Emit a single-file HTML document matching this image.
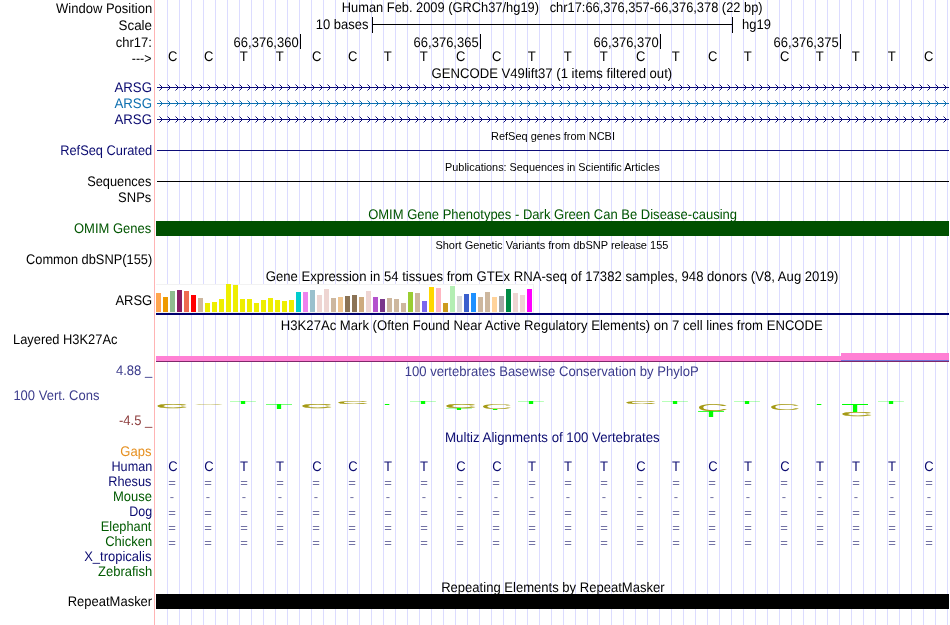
<!DOCTYPE html>
<html lang="en"><head><meta charset="utf-8"><title>UCSC Genome Browser chr17:66,376,357-66,376,378</title>
<style>html,body{margin:0;padding:0;background:#fff}body{width:950px;height:625px;overflow:hidden}svg{display:block;position:absolute;left:0;top:0}.tx{will-change:transform}text{font-family:"Liberation Sans",Arial,Helvetica,sans-serif;font-size:13.9px;fill:#000;text-rendering:geometricPrecision}.s{font-size:11px;text-rendering:auto}.lg{font-size:10px}.e{font-size:13px;text-rendering:auto}.r{text-anchor:end}.m{text-anchor:middle}.n{fill:#0a0a70}.g{fill:#005a00}</style></head><body>
<svg width="950" height="625" viewBox="0 0 950 625">
<rect width="950" height="625" fill="#fff"/>
<g fill="#dcdcff" shape-rendering="crispEdges">
<rect x="167" y="0" width="1" height="625"/>
<rect x="179" y="0" width="1" height="625"/>
<rect x="191" y="0" width="1" height="625"/>
<rect x="203" y="0" width="1" height="625"/>
<rect x="215" y="0" width="1" height="625"/>
<rect x="227" y="0" width="1" height="625"/>
<rect x="239" y="0" width="1" height="625"/>
<rect x="251" y="0" width="1" height="625"/>
<rect x="263" y="0" width="1" height="625"/>
<rect x="275" y="0" width="1" height="625"/>
<rect x="287" y="0" width="1" height="625"/>
<rect x="299" y="0" width="1" height="625"/>
<rect x="311" y="0" width="1" height="625"/>
<rect x="323" y="0" width="1" height="625"/>
<rect x="335" y="0" width="1" height="625"/>
<rect x="347" y="0" width="1" height="625"/>
<rect x="359" y="0" width="1" height="625"/>
<rect x="371" y="0" width="1" height="625"/>
<rect x="383" y="0" width="1" height="625"/>
<rect x="395" y="0" width="1" height="625"/>
<rect x="407" y="0" width="1" height="625"/>
<rect x="419" y="0" width="1" height="625"/>
<rect x="431" y="0" width="1" height="625"/>
<rect x="443" y="0" width="1" height="625"/>
<rect x="455" y="0" width="1" height="625"/>
<rect x="467" y="0" width="1" height="625"/>
<rect x="479" y="0" width="1" height="625"/>
<rect x="491" y="0" width="1" height="625"/>
<rect x="503" y="0" width="1" height="625"/>
<rect x="515" y="0" width="1" height="625"/>
<rect x="527" y="0" width="1" height="625"/>
<rect x="539" y="0" width="1" height="625"/>
<rect x="551" y="0" width="1" height="625"/>
<rect x="563" y="0" width="1" height="625"/>
<rect x="575" y="0" width="1" height="625"/>
<rect x="587" y="0" width="1" height="625"/>
<rect x="599" y="0" width="1" height="625"/>
<rect x="611" y="0" width="1" height="625"/>
<rect x="623" y="0" width="1" height="625"/>
<rect x="635" y="0" width="1" height="625"/>
<rect x="647" y="0" width="1" height="625"/>
<rect x="659" y="0" width="1" height="625"/>
<rect x="671" y="0" width="1" height="625"/>
<rect x="683" y="0" width="1" height="625"/>
<rect x="695" y="0" width="1" height="625"/>
<rect x="707" y="0" width="1" height="625"/>
<rect x="719" y="0" width="1" height="625"/>
<rect x="731" y="0" width="1" height="625"/>
<rect x="743" y="0" width="1" height="625"/>
<rect x="755" y="0" width="1" height="625"/>
<rect x="767" y="0" width="1" height="625"/>
<rect x="779" y="0" width="1" height="625"/>
<rect x="791" y="0" width="1" height="625"/>
<rect x="803" y="0" width="1" height="625"/>
<rect x="815" y="0" width="1" height="625"/>
<rect x="827" y="0" width="1" height="625"/>
<rect x="839" y="0" width="1" height="625"/>
<rect x="851" y="0" width="1" height="625"/>
<rect x="863" y="0" width="1" height="625"/>
<rect x="875" y="0" width="1" height="625"/>
<rect x="887" y="0" width="1" height="625"/>
<rect x="899" y="0" width="1" height="625"/>
<rect x="911" y="0" width="1" height="625"/>
<rect x="923" y="0" width="1" height="625"/>
<rect x="935" y="0" width="1" height="625"/>
<rect x="947" y="0" width="1" height="625"/>
</g>
<rect x="154" y="0" width="1" height="625" fill="#ffb4b4" shape-rendering="crispEdges"/>
<g fill="#000" shape-rendering="crispEdges">
<rect x="372" y="24" width="361" height="1"/><rect x="372" y="17" width="1" height="16"/><rect x="732" y="17" width="1" height="16"/>
<rect x="300" y="34" width="1" height="15"/>
<rect x="480" y="34" width="1" height="15"/>
<rect x="660" y="34" width="1" height="15"/>
<rect x="840" y="34" width="1" height="15"/>
</g>
<g stroke="#0c0c78" fill="none" stroke-width="1">
<rect x="157" y="87" width="792" height="1" fill="#0c0c78" stroke="none" shape-rendering="crispEdges"/>
<path d="M160.5 85.5l2 2l-2 2M168.5 85.5l2 2l-2 2M176.5 85.5l2 2l-2 2M184.5 85.5l2 2l-2 2M192.5 85.5l2 2l-2 2M200.5 85.5l2 2l-2 2M208.5 85.5l2 2l-2 2M216.5 85.5l2 2l-2 2M224.5 85.5l2 2l-2 2M232.5 85.5l2 2l-2 2M240.5 85.5l2 2l-2 2M248.5 85.5l2 2l-2 2M256.5 85.5l2 2l-2 2M264.5 85.5l2 2l-2 2M272.5 85.5l2 2l-2 2M280.5 85.5l2 2l-2 2M288.5 85.5l2 2l-2 2M296.5 85.5l2 2l-2 2M304.5 85.5l2 2l-2 2M312.5 85.5l2 2l-2 2M320.5 85.5l2 2l-2 2M328.5 85.5l2 2l-2 2M336.5 85.5l2 2l-2 2M344.5 85.5l2 2l-2 2M352.5 85.5l2 2l-2 2M360.5 85.5l2 2l-2 2M368.5 85.5l2 2l-2 2M376.5 85.5l2 2l-2 2M384.5 85.5l2 2l-2 2M392.5 85.5l2 2l-2 2M400.5 85.5l2 2l-2 2M408.5 85.5l2 2l-2 2M416.5 85.5l2 2l-2 2M424.5 85.5l2 2l-2 2M432.5 85.5l2 2l-2 2M440.5 85.5l2 2l-2 2M448.5 85.5l2 2l-2 2M456.5 85.5l2 2l-2 2M464.5 85.5l2 2l-2 2M472.5 85.5l2 2l-2 2M480.5 85.5l2 2l-2 2M488.5 85.5l2 2l-2 2M496.5 85.5l2 2l-2 2M504.5 85.5l2 2l-2 2M512.5 85.5l2 2l-2 2M520.5 85.5l2 2l-2 2M528.5 85.5l2 2l-2 2M536.5 85.5l2 2l-2 2M544.5 85.5l2 2l-2 2M552.5 85.5l2 2l-2 2M560.5 85.5l2 2l-2 2M568.5 85.5l2 2l-2 2M576.5 85.5l2 2l-2 2M584.5 85.5l2 2l-2 2M592.5 85.5l2 2l-2 2M600.5 85.5l2 2l-2 2M608.5 85.5l2 2l-2 2M616.5 85.5l2 2l-2 2M624.5 85.5l2 2l-2 2M632.5 85.5l2 2l-2 2M640.5 85.5l2 2l-2 2M648.5 85.5l2 2l-2 2M656.5 85.5l2 2l-2 2M664.5 85.5l2 2l-2 2M672.5 85.5l2 2l-2 2M680.5 85.5l2 2l-2 2M688.5 85.5l2 2l-2 2M696.5 85.5l2 2l-2 2M704.5 85.5l2 2l-2 2M712.5 85.5l2 2l-2 2M720.5 85.5l2 2l-2 2M728.5 85.5l2 2l-2 2M736.5 85.5l2 2l-2 2M744.5 85.5l2 2l-2 2M752.5 85.5l2 2l-2 2M760.5 85.5l2 2l-2 2M768.5 85.5l2 2l-2 2M776.5 85.5l2 2l-2 2M784.5 85.5l2 2l-2 2M792.5 85.5l2 2l-2 2M800.5 85.5l2 2l-2 2M808.5 85.5l2 2l-2 2M816.5 85.5l2 2l-2 2M824.5 85.5l2 2l-2 2M832.5 85.5l2 2l-2 2M840.5 85.5l2 2l-2 2M848.5 85.5l2 2l-2 2M856.5 85.5l2 2l-2 2M864.5 85.5l2 2l-2 2M872.5 85.5l2 2l-2 2M880.5 85.5l2 2l-2 2M888.5 85.5l2 2l-2 2M896.5 85.5l2 2l-2 2M904.5 85.5l2 2l-2 2M912.5 85.5l2 2l-2 2M920.5 85.5l2 2l-2 2M928.5 85.5l2 2l-2 2M936.5 85.5l2 2l-2 2M944.5 85.5l2 2l-2 2" shape-rendering="crispEdges" stroke-linecap="square"/>
<path d="M159 84.5h1M159 90.5h1M167 84.5h1M167 90.5h1M175 84.5h1M175 90.5h1M183 84.5h1M183 90.5h1M191 84.5h1M191 90.5h1M199 84.5h1M199 90.5h1M207 84.5h1M207 90.5h1M215 84.5h1M215 90.5h1M223 84.5h1M223 90.5h1M231 84.5h1M231 90.5h1M239 84.5h1M239 90.5h1M247 84.5h1M247 90.5h1M255 84.5h1M255 90.5h1M263 84.5h1M263 90.5h1M271 84.5h1M271 90.5h1M279 84.5h1M279 90.5h1M287 84.5h1M287 90.5h1M295 84.5h1M295 90.5h1M303 84.5h1M303 90.5h1M311 84.5h1M311 90.5h1M319 84.5h1M319 90.5h1M327 84.5h1M327 90.5h1M335 84.5h1M335 90.5h1M343 84.5h1M343 90.5h1M351 84.5h1M351 90.5h1M359 84.5h1M359 90.5h1M367 84.5h1M367 90.5h1M375 84.5h1M375 90.5h1M383 84.5h1M383 90.5h1M391 84.5h1M391 90.5h1M399 84.5h1M399 90.5h1M407 84.5h1M407 90.5h1M415 84.5h1M415 90.5h1M423 84.5h1M423 90.5h1M431 84.5h1M431 90.5h1M439 84.5h1M439 90.5h1M447 84.5h1M447 90.5h1M455 84.5h1M455 90.5h1M463 84.5h1M463 90.5h1M471 84.5h1M471 90.5h1M479 84.5h1M479 90.5h1M487 84.5h1M487 90.5h1M495 84.5h1M495 90.5h1M503 84.5h1M503 90.5h1M511 84.5h1M511 90.5h1M519 84.5h1M519 90.5h1M527 84.5h1M527 90.5h1M535 84.5h1M535 90.5h1M543 84.5h1M543 90.5h1M551 84.5h1M551 90.5h1M559 84.5h1M559 90.5h1M567 84.5h1M567 90.5h1M575 84.5h1M575 90.5h1M583 84.5h1M583 90.5h1M591 84.5h1M591 90.5h1M599 84.5h1M599 90.5h1M607 84.5h1M607 90.5h1M615 84.5h1M615 90.5h1M623 84.5h1M623 90.5h1M631 84.5h1M631 90.5h1M639 84.5h1M639 90.5h1M647 84.5h1M647 90.5h1M655 84.5h1M655 90.5h1M663 84.5h1M663 90.5h1M671 84.5h1M671 90.5h1M679 84.5h1M679 90.5h1M687 84.5h1M687 90.5h1M695 84.5h1M695 90.5h1M703 84.5h1M703 90.5h1M711 84.5h1M711 90.5h1M719 84.5h1M719 90.5h1M727 84.5h1M727 90.5h1M735 84.5h1M735 90.5h1M743 84.5h1M743 90.5h1M751 84.5h1M751 90.5h1M759 84.5h1M759 90.5h1M767 84.5h1M767 90.5h1M775 84.5h1M775 90.5h1M783 84.5h1M783 90.5h1M791 84.5h1M791 90.5h1M799 84.5h1M799 90.5h1M807 84.5h1M807 90.5h1M815 84.5h1M815 90.5h1M823 84.5h1M823 90.5h1M831 84.5h1M831 90.5h1M839 84.5h1M839 90.5h1M847 84.5h1M847 90.5h1M855 84.5h1M855 90.5h1M863 84.5h1M863 90.5h1M871 84.5h1M871 90.5h1M879 84.5h1M879 90.5h1M887 84.5h1M887 90.5h1M895 84.5h1M895 90.5h1M903 84.5h1M903 90.5h1M911 84.5h1M911 90.5h1M919 84.5h1M919 90.5h1M927 84.5h1M927 90.5h1M935 84.5h1M935 90.5h1M943 84.5h1M943 90.5h1" shape-rendering="crispEdges" stroke-opacity="0.5"/>
</g>
<g stroke="#0e70b0" fill="none" stroke-width="1">
<rect x="157" y="103" width="792" height="1" fill="#0e70b0" stroke="none" shape-rendering="crispEdges"/>
<path d="M160.5 101.5l2 2l-2 2M168.5 101.5l2 2l-2 2M176.5 101.5l2 2l-2 2M184.5 101.5l2 2l-2 2M192.5 101.5l2 2l-2 2M200.5 101.5l2 2l-2 2M208.5 101.5l2 2l-2 2M216.5 101.5l2 2l-2 2M224.5 101.5l2 2l-2 2M232.5 101.5l2 2l-2 2M240.5 101.5l2 2l-2 2M248.5 101.5l2 2l-2 2M256.5 101.5l2 2l-2 2M264.5 101.5l2 2l-2 2M272.5 101.5l2 2l-2 2M280.5 101.5l2 2l-2 2M288.5 101.5l2 2l-2 2M296.5 101.5l2 2l-2 2M304.5 101.5l2 2l-2 2M312.5 101.5l2 2l-2 2M320.5 101.5l2 2l-2 2M328.5 101.5l2 2l-2 2M336.5 101.5l2 2l-2 2M344.5 101.5l2 2l-2 2M352.5 101.5l2 2l-2 2M360.5 101.5l2 2l-2 2M368.5 101.5l2 2l-2 2M376.5 101.5l2 2l-2 2M384.5 101.5l2 2l-2 2M392.5 101.5l2 2l-2 2M400.5 101.5l2 2l-2 2M408.5 101.5l2 2l-2 2M416.5 101.5l2 2l-2 2M424.5 101.5l2 2l-2 2M432.5 101.5l2 2l-2 2M440.5 101.5l2 2l-2 2M448.5 101.5l2 2l-2 2M456.5 101.5l2 2l-2 2M464.5 101.5l2 2l-2 2M472.5 101.5l2 2l-2 2M480.5 101.5l2 2l-2 2M488.5 101.5l2 2l-2 2M496.5 101.5l2 2l-2 2M504.5 101.5l2 2l-2 2M512.5 101.5l2 2l-2 2M520.5 101.5l2 2l-2 2M528.5 101.5l2 2l-2 2M536.5 101.5l2 2l-2 2M544.5 101.5l2 2l-2 2M552.5 101.5l2 2l-2 2M560.5 101.5l2 2l-2 2M568.5 101.5l2 2l-2 2M576.5 101.5l2 2l-2 2M584.5 101.5l2 2l-2 2M592.5 101.5l2 2l-2 2M600.5 101.5l2 2l-2 2M608.5 101.5l2 2l-2 2M616.5 101.5l2 2l-2 2M624.5 101.5l2 2l-2 2M632.5 101.5l2 2l-2 2M640.5 101.5l2 2l-2 2M648.5 101.5l2 2l-2 2M656.5 101.5l2 2l-2 2M664.5 101.5l2 2l-2 2M672.5 101.5l2 2l-2 2M680.5 101.5l2 2l-2 2M688.5 101.5l2 2l-2 2M696.5 101.5l2 2l-2 2M704.5 101.5l2 2l-2 2M712.5 101.5l2 2l-2 2M720.5 101.5l2 2l-2 2M728.5 101.5l2 2l-2 2M736.5 101.5l2 2l-2 2M744.5 101.5l2 2l-2 2M752.5 101.5l2 2l-2 2M760.5 101.5l2 2l-2 2M768.5 101.5l2 2l-2 2M776.5 101.5l2 2l-2 2M784.5 101.5l2 2l-2 2M792.5 101.5l2 2l-2 2M800.5 101.5l2 2l-2 2M808.5 101.5l2 2l-2 2M816.5 101.5l2 2l-2 2M824.5 101.5l2 2l-2 2M832.5 101.5l2 2l-2 2M840.5 101.5l2 2l-2 2M848.5 101.5l2 2l-2 2M856.5 101.5l2 2l-2 2M864.5 101.5l2 2l-2 2M872.5 101.5l2 2l-2 2M880.5 101.5l2 2l-2 2M888.5 101.5l2 2l-2 2M896.5 101.5l2 2l-2 2M904.5 101.5l2 2l-2 2M912.5 101.5l2 2l-2 2M920.5 101.5l2 2l-2 2M928.5 101.5l2 2l-2 2M936.5 101.5l2 2l-2 2M944.5 101.5l2 2l-2 2" shape-rendering="crispEdges" stroke-linecap="square"/>
<path d="M159 100.5h1M159 106.5h1M167 100.5h1M167 106.5h1M175 100.5h1M175 106.5h1M183 100.5h1M183 106.5h1M191 100.5h1M191 106.5h1M199 100.5h1M199 106.5h1M207 100.5h1M207 106.5h1M215 100.5h1M215 106.5h1M223 100.5h1M223 106.5h1M231 100.5h1M231 106.5h1M239 100.5h1M239 106.5h1M247 100.5h1M247 106.5h1M255 100.5h1M255 106.5h1M263 100.5h1M263 106.5h1M271 100.5h1M271 106.5h1M279 100.5h1M279 106.5h1M287 100.5h1M287 106.5h1M295 100.5h1M295 106.5h1M303 100.5h1M303 106.5h1M311 100.5h1M311 106.5h1M319 100.5h1M319 106.5h1M327 100.5h1M327 106.5h1M335 100.5h1M335 106.5h1M343 100.5h1M343 106.5h1M351 100.5h1M351 106.5h1M359 100.5h1M359 106.5h1M367 100.5h1M367 106.5h1M375 100.5h1M375 106.5h1M383 100.5h1M383 106.5h1M391 100.5h1M391 106.5h1M399 100.5h1M399 106.5h1M407 100.5h1M407 106.5h1M415 100.5h1M415 106.5h1M423 100.5h1M423 106.5h1M431 100.5h1M431 106.5h1M439 100.5h1M439 106.5h1M447 100.5h1M447 106.5h1M455 100.5h1M455 106.5h1M463 100.5h1M463 106.5h1M471 100.5h1M471 106.5h1M479 100.5h1M479 106.5h1M487 100.5h1M487 106.5h1M495 100.5h1M495 106.5h1M503 100.5h1M503 106.5h1M511 100.5h1M511 106.5h1M519 100.5h1M519 106.5h1M527 100.5h1M527 106.5h1M535 100.5h1M535 106.5h1M543 100.5h1M543 106.5h1M551 100.5h1M551 106.5h1M559 100.5h1M559 106.5h1M567 100.5h1M567 106.5h1M575 100.5h1M575 106.5h1M583 100.5h1M583 106.5h1M591 100.5h1M591 106.5h1M599 100.5h1M599 106.5h1M607 100.5h1M607 106.5h1M615 100.5h1M615 106.5h1M623 100.5h1M623 106.5h1M631 100.5h1M631 106.5h1M639 100.5h1M639 106.5h1M647 100.5h1M647 106.5h1M655 100.5h1M655 106.5h1M663 100.5h1M663 106.5h1M671 100.5h1M671 106.5h1M679 100.5h1M679 106.5h1M687 100.5h1M687 106.5h1M695 100.5h1M695 106.5h1M703 100.5h1M703 106.5h1M711 100.5h1M711 106.5h1M719 100.5h1M719 106.5h1M727 100.5h1M727 106.5h1M735 100.5h1M735 106.5h1M743 100.5h1M743 106.5h1M751 100.5h1M751 106.5h1M759 100.5h1M759 106.5h1M767 100.5h1M767 106.5h1M775 100.5h1M775 106.5h1M783 100.5h1M783 106.5h1M791 100.5h1M791 106.5h1M799 100.5h1M799 106.5h1M807 100.5h1M807 106.5h1M815 100.5h1M815 106.5h1M823 100.5h1M823 106.5h1M831 100.5h1M831 106.5h1M839 100.5h1M839 106.5h1M847 100.5h1M847 106.5h1M855 100.5h1M855 106.5h1M863 100.5h1M863 106.5h1M871 100.5h1M871 106.5h1M879 100.5h1M879 106.5h1M887 100.5h1M887 106.5h1M895 100.5h1M895 106.5h1M903 100.5h1M903 106.5h1M911 100.5h1M911 106.5h1M919 100.5h1M919 106.5h1M927 100.5h1M927 106.5h1M935 100.5h1M935 106.5h1M943 100.5h1M943 106.5h1" shape-rendering="crispEdges" stroke-opacity="0.5"/>
</g>
<g stroke="#0c0c78" fill="none" stroke-width="1">
<rect x="157" y="119" width="792" height="1" fill="#0c0c78" stroke="none" shape-rendering="crispEdges"/>
<path d="M160.5 117.5l2 2l-2 2M168.5 117.5l2 2l-2 2M176.5 117.5l2 2l-2 2M184.5 117.5l2 2l-2 2M192.5 117.5l2 2l-2 2M200.5 117.5l2 2l-2 2M208.5 117.5l2 2l-2 2M216.5 117.5l2 2l-2 2M224.5 117.5l2 2l-2 2M232.5 117.5l2 2l-2 2M240.5 117.5l2 2l-2 2M248.5 117.5l2 2l-2 2M256.5 117.5l2 2l-2 2M264.5 117.5l2 2l-2 2M272.5 117.5l2 2l-2 2M280.5 117.5l2 2l-2 2M288.5 117.5l2 2l-2 2M296.5 117.5l2 2l-2 2M304.5 117.5l2 2l-2 2M312.5 117.5l2 2l-2 2M320.5 117.5l2 2l-2 2M328.5 117.5l2 2l-2 2M336.5 117.5l2 2l-2 2M344.5 117.5l2 2l-2 2M352.5 117.5l2 2l-2 2M360.5 117.5l2 2l-2 2M368.5 117.5l2 2l-2 2M376.5 117.5l2 2l-2 2M384.5 117.5l2 2l-2 2M392.5 117.5l2 2l-2 2M400.5 117.5l2 2l-2 2M408.5 117.5l2 2l-2 2M416.5 117.5l2 2l-2 2M424.5 117.5l2 2l-2 2M432.5 117.5l2 2l-2 2M440.5 117.5l2 2l-2 2M448.5 117.5l2 2l-2 2M456.5 117.5l2 2l-2 2M464.5 117.5l2 2l-2 2M472.5 117.5l2 2l-2 2M480.5 117.5l2 2l-2 2M488.5 117.5l2 2l-2 2M496.5 117.5l2 2l-2 2M504.5 117.5l2 2l-2 2M512.5 117.5l2 2l-2 2M520.5 117.5l2 2l-2 2M528.5 117.5l2 2l-2 2M536.5 117.5l2 2l-2 2M544.5 117.5l2 2l-2 2M552.5 117.5l2 2l-2 2M560.5 117.5l2 2l-2 2M568.5 117.5l2 2l-2 2M576.5 117.5l2 2l-2 2M584.5 117.5l2 2l-2 2M592.5 117.5l2 2l-2 2M600.5 117.5l2 2l-2 2M608.5 117.5l2 2l-2 2M616.5 117.5l2 2l-2 2M624.5 117.5l2 2l-2 2M632.5 117.5l2 2l-2 2M640.5 117.5l2 2l-2 2M648.5 117.5l2 2l-2 2M656.5 117.5l2 2l-2 2M664.5 117.5l2 2l-2 2M672.5 117.5l2 2l-2 2M680.5 117.5l2 2l-2 2M688.5 117.5l2 2l-2 2M696.5 117.5l2 2l-2 2M704.5 117.5l2 2l-2 2M712.5 117.5l2 2l-2 2M720.5 117.5l2 2l-2 2M728.5 117.5l2 2l-2 2M736.5 117.5l2 2l-2 2M744.5 117.5l2 2l-2 2M752.5 117.5l2 2l-2 2M760.5 117.5l2 2l-2 2M768.5 117.5l2 2l-2 2M776.5 117.5l2 2l-2 2M784.5 117.5l2 2l-2 2M792.5 117.5l2 2l-2 2M800.5 117.5l2 2l-2 2M808.5 117.5l2 2l-2 2M816.5 117.5l2 2l-2 2M824.5 117.5l2 2l-2 2M832.5 117.5l2 2l-2 2M840.5 117.5l2 2l-2 2M848.5 117.5l2 2l-2 2M856.5 117.5l2 2l-2 2M864.5 117.5l2 2l-2 2M872.5 117.5l2 2l-2 2M880.5 117.5l2 2l-2 2M888.5 117.5l2 2l-2 2M896.5 117.5l2 2l-2 2M904.5 117.5l2 2l-2 2M912.5 117.5l2 2l-2 2M920.5 117.5l2 2l-2 2M928.5 117.5l2 2l-2 2M936.5 117.5l2 2l-2 2M944.5 117.5l2 2l-2 2" shape-rendering="crispEdges" stroke-linecap="square"/>
<path d="M159 116.5h1M159 122.5h1M167 116.5h1M167 122.5h1M175 116.5h1M175 122.5h1M183 116.5h1M183 122.5h1M191 116.5h1M191 122.5h1M199 116.5h1M199 122.5h1M207 116.5h1M207 122.5h1M215 116.5h1M215 122.5h1M223 116.5h1M223 122.5h1M231 116.5h1M231 122.5h1M239 116.5h1M239 122.5h1M247 116.5h1M247 122.5h1M255 116.5h1M255 122.5h1M263 116.5h1M263 122.5h1M271 116.5h1M271 122.5h1M279 116.5h1M279 122.5h1M287 116.5h1M287 122.5h1M295 116.5h1M295 122.5h1M303 116.5h1M303 122.5h1M311 116.5h1M311 122.5h1M319 116.5h1M319 122.5h1M327 116.5h1M327 122.5h1M335 116.5h1M335 122.5h1M343 116.5h1M343 122.5h1M351 116.5h1M351 122.5h1M359 116.5h1M359 122.5h1M367 116.5h1M367 122.5h1M375 116.5h1M375 122.5h1M383 116.5h1M383 122.5h1M391 116.5h1M391 122.5h1M399 116.5h1M399 122.5h1M407 116.5h1M407 122.5h1M415 116.5h1M415 122.5h1M423 116.5h1M423 122.5h1M431 116.5h1M431 122.5h1M439 116.5h1M439 122.5h1M447 116.5h1M447 122.5h1M455 116.5h1M455 122.5h1M463 116.5h1M463 122.5h1M471 116.5h1M471 122.5h1M479 116.5h1M479 122.5h1M487 116.5h1M487 122.5h1M495 116.5h1M495 122.5h1M503 116.5h1M503 122.5h1M511 116.5h1M511 122.5h1M519 116.5h1M519 122.5h1M527 116.5h1M527 122.5h1M535 116.5h1M535 122.5h1M543 116.5h1M543 122.5h1M551 116.5h1M551 122.5h1M559 116.5h1M559 122.5h1M567 116.5h1M567 122.5h1M575 116.5h1M575 122.5h1M583 116.5h1M583 122.5h1M591 116.5h1M591 122.5h1M599 116.5h1M599 122.5h1M607 116.5h1M607 122.5h1M615 116.5h1M615 122.5h1M623 116.5h1M623 122.5h1M631 116.5h1M631 122.5h1M639 116.5h1M639 122.5h1M647 116.5h1M647 122.5h1M655 116.5h1M655 122.5h1M663 116.5h1M663 122.5h1M671 116.5h1M671 122.5h1M679 116.5h1M679 122.5h1M687 116.5h1M687 122.5h1M695 116.5h1M695 122.5h1M703 116.5h1M703 122.5h1M711 116.5h1M711 122.5h1M719 116.5h1M719 122.5h1M727 116.5h1M727 122.5h1M735 116.5h1M735 122.5h1M743 116.5h1M743 122.5h1M751 116.5h1M751 122.5h1M759 116.5h1M759 122.5h1M767 116.5h1M767 122.5h1M775 116.5h1M775 122.5h1M783 116.5h1M783 122.5h1M791 116.5h1M791 122.5h1M799 116.5h1M799 122.5h1M807 116.5h1M807 122.5h1M815 116.5h1M815 122.5h1M823 116.5h1M823 122.5h1M831 116.5h1M831 122.5h1M839 116.5h1M839 122.5h1M847 116.5h1M847 122.5h1M855 116.5h1M855 122.5h1M863 116.5h1M863 122.5h1M871 116.5h1M871 122.5h1M879 116.5h1M879 122.5h1M887 116.5h1M887 122.5h1M895 116.5h1M895 122.5h1M903 116.5h1M903 122.5h1M911 116.5h1M911 122.5h1M919 116.5h1M919 122.5h1M927 116.5h1M927 122.5h1M935 116.5h1M935 122.5h1M943 116.5h1M943 122.5h1" shape-rendering="crispEdges" stroke-opacity="0.5"/>
</g>
<rect x="157" y="150" width="792" height="1" fill="#0c0c78" shape-rendering="crispEdges"/>
<rect x="157" y="181" width="792" height="1" fill="#000" shape-rendering="crispEdges"/>
<rect x="156" y="221" width="793" height="15" fill="#005000" shape-rendering="crispEdges"/>
<g shape-rendering="crispEdges">
<rect x="156" y="284" width="378" height="29" fill="#f2f2f2"/><rect x="156" y="285" width="377" height="27" fill="#fff"/>
<rect x="156" y="293" width="5" height="19" fill="#FFA54F"/>
<rect x="163" y="297" width="5" height="15" fill="#EE9A00"/>
<rect x="170" y="291" width="5" height="21" fill="#8FBC8F"/>
<rect x="177" y="290" width="5" height="22" fill="#8B1C62"/>
<rect x="184" y="291" width="5" height="21" fill="#EE6A50"/>
<rect x="191" y="295" width="5" height="17" fill="#FF0000"/>
<rect x="198" y="298" width="5" height="14" fill="#CDB79E"/>
<rect x="205" y="303" width="5" height="9" fill="#EEEE00"/>
<rect x="212" y="302" width="5" height="10" fill="#EEEE00"/>
<rect x="219" y="299" width="5" height="13" fill="#EEEE00"/>
<rect x="226" y="284" width="5" height="28" fill="#EEEE00"/>
<rect x="233" y="285" width="5" height="27" fill="#EEEE00"/>
<rect x="240" y="299" width="5" height="13" fill="#EEEE00"/>
<rect x="247" y="299" width="5" height="13" fill="#EEEE00"/>
<rect x="254" y="303" width="5" height="9" fill="#EEEE00"/>
<rect x="261" y="300" width="5" height="12" fill="#EEEE00"/>
<rect x="268" y="298" width="5" height="14" fill="#EEEE00"/>
<rect x="275" y="300" width="5" height="12" fill="#EEEE00"/>
<rect x="282" y="301" width="5" height="11" fill="#EEEE00"/>
<rect x="289" y="300" width="5" height="12" fill="#EEEE00"/>
<rect x="296" y="292" width="5" height="20" fill="#00CDCD"/>
<rect x="303" y="292" width="5" height="20" fill="#EE82EE"/>
<rect x="310" y="290" width="5" height="22" fill="#9AC0CD"/>
<rect x="317" y="295" width="5" height="17" fill="#EED5D2"/>
<rect x="324" y="289" width="5" height="23" fill="#EED5D2"/>
<rect x="331" y="298" width="5" height="14" fill="#CDB79E"/>
<rect x="338" y="297" width="5" height="15" fill="#EEC591"/>
<rect x="345" y="296" width="5" height="16" fill="#8B7355"/>
<rect x="352" y="295" width="5" height="17" fill="#8B7355"/>
<rect x="359" y="297" width="5" height="15" fill="#CDAA7D"/>
<rect x="366" y="291" width="5" height="21" fill="#EED5D2"/>
<rect x="373" y="297" width="5" height="15" fill="#B452CD"/>
<rect x="380" y="299" width="5" height="13" fill="#7A378B"/>
<rect x="387" y="298" width="5" height="14" fill="#CDB79E"/>
<rect x="394" y="299" width="5" height="13" fill="#CDB79E"/>
<rect x="401" y="303" width="5" height="9" fill="#CDB79E"/>
<rect x="408" y="292" width="5" height="20" fill="#9ACD32"/>
<rect x="415" y="293" width="5" height="19" fill="#CDB79E"/>
<rect x="422" y="301" width="5" height="11" fill="#7A67EE"/>
<rect x="429" y="287" width="5" height="25" fill="#FFD700"/>
<rect x="436" y="288" width="5" height="24" fill="#FFB6C1"/>
<rect x="443" y="303" width="5" height="9" fill="#CD9B1D"/>
<rect x="450" y="286" width="5" height="26" fill="#B4EEB4"/>
<rect x="457" y="296" width="5" height="16" fill="#D9D9D9"/>
<rect x="464" y="294" width="5" height="18" fill="#3A5FCD"/>
<rect x="471" y="293" width="5" height="19" fill="#1E90FF"/>
<rect x="478" y="297" width="5" height="15" fill="#CDB79E"/>
<rect x="485" y="292" width="5" height="20" fill="#CDB79E"/>
<rect x="492" y="297" width="5" height="15" fill="#FFD39B"/>
<rect x="499" y="296" width="5" height="16" fill="#A6A6A6"/>
<rect x="506" y="289" width="5" height="23" fill="#008B45"/>
<rect x="513" y="293" width="5" height="19" fill="#EED5D2"/>
<rect x="520" y="295" width="5" height="17" fill="#EED5D2"/>
<rect x="527" y="289" width="5" height="23" fill="#FF00FF"/>
<rect x="156" y="313" width="793" height="2" fill="#00006e"/>
<rect x="156" y="356" width="793" height="6" fill="#ff80d4"/><rect x="841" y="353" width="108" height="3" fill="#ff80d4"/>
<rect x="841" y="360" width="108" height="1" fill="#7272d8"/><rect x="156" y="361" width="793" height="1" fill="#80286a"/>
</g>
<rect x="156" y="594" width="793" height="15" fill="#000" shape-rendering="crispEdges"/>
</svg>
<svg class="tx" width="950" height="625" viewBox="0 0 950 625">
<text x="152.2" y="13" class="r" textLength="96.1" lengthAdjust="spacingAndGlyphs" xml:space="preserve">Window Position</text>
<text x="152.0" y="30" class="r" textLength="33.5" lengthAdjust="spacingAndGlyphs" xml:space="preserve">Scale</text>
<text x="151.79999999999998" y="47" class="r" textLength="36.1" lengthAdjust="spacingAndGlyphs" xml:space="preserve">chr17:</text>
<text x="151.39999999999998" y="62.8" class="r" textLength="19.6" lengthAdjust="spacingAndGlyphs" xml:space="preserve">---&gt;</text>
<text x="152.0" y="92" class="r n" textLength="37.6" lengthAdjust="spacingAndGlyphs" xml:space="preserve">ARSG</text>
<text x="152.0" y="108" class="r" style="fill:#0e70b0" textLength="37.6" lengthAdjust="spacingAndGlyphs" xml:space="preserve">ARSG</text>
<text x="152.0" y="124" class="r n" textLength="37.6" lengthAdjust="spacingAndGlyphs" xml:space="preserve">ARSG</text>
<text x="152.2" y="155" class="r n" textLength="92.0" lengthAdjust="spacingAndGlyphs" xml:space="preserve">RefSeq Curated</text>
<text x="151.29999999999998" y="186" class="r" textLength="64.1" lengthAdjust="spacingAndGlyphs" xml:space="preserve">Sequences</text>
<text x="151.29999999999998" y="202" class="r" textLength="33.2" lengthAdjust="spacingAndGlyphs" xml:space="preserve">SNPs</text>
<text x="151.29999999999998" y="233" class="r" style="fill:#005500" textLength="77.3" lengthAdjust="spacingAndGlyphs" xml:space="preserve">OMIM Genes</text>
<text x="152.2" y="264" class="r" textLength="126.2" lengthAdjust="spacingAndGlyphs" xml:space="preserve">Common dbSNP(155)</text>
<text x="152.2" y="305" class="r" textLength="36.8" lengthAdjust="spacingAndGlyphs" xml:space="preserve">ARSG</text>
<text x="13" y="344" textLength="104.4" lengthAdjust="spacingAndGlyphs" xml:space="preserve">Layered H3K27Ac</text>
<text x="152.2" y="375" class="r" style="fill:#3c3c8c" textLength="36.2" lengthAdjust="spacingAndGlyphs" xml:space="preserve">4.88 _</text>
<text x="13.4" y="400" style="fill:#3c3c8c" textLength="86.0" lengthAdjust="spacingAndGlyphs" xml:space="preserve">100 Vert. Cons</text>
<text x="152.2" y="425" class="r" style="fill:#8c3c3c" textLength="33.2" lengthAdjust="spacingAndGlyphs" xml:space="preserve">-4.5 _</text>
<text x="151.39999999999998" y="456" class="r" style="fill:#e69020" textLength="31.1" lengthAdjust="spacingAndGlyphs" xml:space="preserve">Gaps</text>
<text x="152.2" y="471" class="r n" textLength="40.7" lengthAdjust="spacingAndGlyphs" xml:space="preserve">Human</text>
<text x="151.39999999999998" y="486" class="r n" textLength="43.2" lengthAdjust="spacingAndGlyphs" xml:space="preserve">Rhesus</text>
<text x="151.89999999999998" y="501" class="r g" textLength="39.0" lengthAdjust="spacingAndGlyphs" xml:space="preserve">Mouse</text>
<text x="152.2" y="516" class="r n" textLength="22.9" lengthAdjust="spacingAndGlyphs" xml:space="preserve">Dog</text>
<text x="151.39999999999998" y="531" class="r g" textLength="50.6" lengthAdjust="spacingAndGlyphs" xml:space="preserve">Elephant</text>
<text x="152.2" y="546" class="r g" textLength="47.0" lengthAdjust="spacingAndGlyphs" xml:space="preserve">Chicken</text>
<text x="151.39999999999998" y="561" class="r n" textLength="67.2" lengthAdjust="spacingAndGlyphs" xml:space="preserve">X_tropicalis</text>
<text x="152.2" y="576" class="r g" textLength="54.2" lengthAdjust="spacingAndGlyphs" xml:space="preserve">Zebrafish</text>
<text x="152.2" y="606" class="r" textLength="84.5" lengthAdjust="spacingAndGlyphs" xml:space="preserve">RepeatMasker</text>
<text x="552.2" y="12" class="m" textLength="420.8" lengthAdjust="spacingAndGlyphs" xml:space="preserve">Human Feb. 2009 (GRCh37/hg19)   chr17:66,376,357-66,376,378 (22 bp)</text>
<text x="368.5" y="29" class="r" textLength="52.8" lengthAdjust="spacingAndGlyphs" xml:space="preserve">10 bases</text>
<text x="742" y="29" textLength="28.9" lengthAdjust="spacingAndGlyphs" xml:space="preserve">hg19</text>
<text x="298.7" y="47" class="r" textLength="65.1" lengthAdjust="spacingAndGlyphs" xml:space="preserve">66,376,360</text>
<text x="478.7" y="47" class="r" textLength="65.1" lengthAdjust="spacingAndGlyphs" xml:space="preserve">66,376,365</text>
<text x="658.7" y="47" class="r" textLength="65.1" lengthAdjust="spacingAndGlyphs" xml:space="preserve">66,376,370</text>
<text x="838.7" y="47" class="r" textLength="65.1" lengthAdjust="spacingAndGlyphs" xml:space="preserve">66,376,375</text>
<text x="172.8" y="61" class="m" textLength="9.4" lengthAdjust="spacingAndGlyphs" xml:space="preserve">C</text>
<text x="208.8" y="61" class="m" textLength="9.4" lengthAdjust="spacingAndGlyphs" xml:space="preserve">C</text>
<text x="243.8" y="61" class="m" textLength="8.0" lengthAdjust="spacingAndGlyphs" xml:space="preserve">T</text>
<text x="279.8" y="61" class="m" textLength="8.0" lengthAdjust="spacingAndGlyphs" xml:space="preserve">T</text>
<text x="316.8" y="61" class="m" textLength="9.4" lengthAdjust="spacingAndGlyphs" xml:space="preserve">C</text>
<text x="352.8" y="61" class="m" textLength="9.4" lengthAdjust="spacingAndGlyphs" xml:space="preserve">C</text>
<text x="387.8" y="61" class="m" textLength="8.0" lengthAdjust="spacingAndGlyphs" xml:space="preserve">T</text>
<text x="423.8" y="61" class="m" textLength="8.0" lengthAdjust="spacingAndGlyphs" xml:space="preserve">T</text>
<text x="460.8" y="61" class="m" textLength="9.4" lengthAdjust="spacingAndGlyphs" xml:space="preserve">C</text>
<text x="496.8" y="61" class="m" textLength="9.4" lengthAdjust="spacingAndGlyphs" xml:space="preserve">C</text>
<text x="531.8" y="61" class="m" textLength="8.0" lengthAdjust="spacingAndGlyphs" xml:space="preserve">T</text>
<text x="567.8" y="61" class="m" textLength="8.0" lengthAdjust="spacingAndGlyphs" xml:space="preserve">T</text>
<text x="603.8" y="61" class="m" textLength="8.0" lengthAdjust="spacingAndGlyphs" xml:space="preserve">T</text>
<text x="640.8" y="61" class="m" textLength="9.4" lengthAdjust="spacingAndGlyphs" xml:space="preserve">C</text>
<text x="675.8" y="61" class="m" textLength="8.0" lengthAdjust="spacingAndGlyphs" xml:space="preserve">T</text>
<text x="712.8" y="61" class="m" textLength="9.4" lengthAdjust="spacingAndGlyphs" xml:space="preserve">C</text>
<text x="747.8" y="61" class="m" textLength="8.0" lengthAdjust="spacingAndGlyphs" xml:space="preserve">T</text>
<text x="784.8" y="61" class="m" textLength="9.4" lengthAdjust="spacingAndGlyphs" xml:space="preserve">C</text>
<text x="819.8" y="61" class="m" textLength="8.0" lengthAdjust="spacingAndGlyphs" xml:space="preserve">T</text>
<text x="855.8" y="61" class="m" textLength="8.0" lengthAdjust="spacingAndGlyphs" xml:space="preserve">T</text>
<text x="891.8" y="61" class="m" textLength="8.0" lengthAdjust="spacingAndGlyphs" xml:space="preserve">T</text>
<text x="928.8" y="61" class="m" textLength="9.4" lengthAdjust="spacingAndGlyphs" xml:space="preserve">C</text>
<text x="551.9" y="78" class="m" textLength="240.6" lengthAdjust="spacingAndGlyphs" xml:space="preserve">GENCODE V49lift37 (1 items filtered out)</text>
<text x="553.0" y="140" class="m s" textLength="124.0" lengthAdjust="spacingAndGlyphs" xml:space="preserve">RefSeq genes from NCBI</text>
<text x="552.4" y="171" class="m s" textLength="214.6" lengthAdjust="spacingAndGlyphs" xml:space="preserve">Publications: Sequences in Scientific Articles</text>
<text x="552.6" y="219" class="m" style="fill:#005500" textLength="368.9" lengthAdjust="spacingAndGlyphs" xml:space="preserve">OMIM Gene Phenotypes - Dark Green Can Be Disease-causing</text>
<text x="551.9" y="249" class="m s" textLength="233.0" lengthAdjust="spacingAndGlyphs" xml:space="preserve">Short Genetic Variants from dbSNP release 155</text>
<text x="552.1" y="281" class="m" textLength="572.6" lengthAdjust="spacingAndGlyphs" xml:space="preserve">Gene Expression in 54 tissues from GTEx RNA-seq of 17382 samples, 948 donors (V8, Aug 2019)</text>
<text x="551.8" y="330" class="m" textLength="541.9" lengthAdjust="spacingAndGlyphs" xml:space="preserve">H3K27Ac Mark (Often Found Near Active Regulatory Elements) on 7 cell lines from ENCODE</text>
<text x="551.7" y="376" class="m" style="fill:#3c3c8c" textLength="294.0" lengthAdjust="spacingAndGlyphs" xml:space="preserve">100 vertebrates Basewise Conservation by PhyloP</text>
<text x="552.4" y="442" class="m n" textLength="214.6" lengthAdjust="spacingAndGlyphs" xml:space="preserve">Multiz Alignments of 100 Vertebrates</text>
<text x="552.9" y="592" class="m" textLength="223.5" lengthAdjust="spacingAndGlyphs" xml:space="preserve">Repeating Elements by RepeatMasker</text>
<text x="173" y="471" class="m n" textLength="9.4" lengthAdjust="spacingAndGlyphs" xml:space="preserve">C</text>
<text x="209" y="471" class="m n" textLength="9.4" lengthAdjust="spacingAndGlyphs" xml:space="preserve">C</text>
<text x="244" y="471" class="m n" textLength="8.0" lengthAdjust="spacingAndGlyphs" xml:space="preserve">T</text>
<text x="280" y="471" class="m n" textLength="8.0" lengthAdjust="spacingAndGlyphs" xml:space="preserve">T</text>
<text x="317" y="471" class="m n" textLength="9.4" lengthAdjust="spacingAndGlyphs" xml:space="preserve">C</text>
<text x="353" y="471" class="m n" textLength="9.4" lengthAdjust="spacingAndGlyphs" xml:space="preserve">C</text>
<text x="388" y="471" class="m n" textLength="8.0" lengthAdjust="spacingAndGlyphs" xml:space="preserve">T</text>
<text x="424" y="471" class="m n" textLength="8.0" lengthAdjust="spacingAndGlyphs" xml:space="preserve">T</text>
<text x="461" y="471" class="m n" textLength="9.4" lengthAdjust="spacingAndGlyphs" xml:space="preserve">C</text>
<text x="497" y="471" class="m n" textLength="9.4" lengthAdjust="spacingAndGlyphs" xml:space="preserve">C</text>
<text x="532" y="471" class="m n" textLength="8.0" lengthAdjust="spacingAndGlyphs" xml:space="preserve">T</text>
<text x="568" y="471" class="m n" textLength="8.0" lengthAdjust="spacingAndGlyphs" xml:space="preserve">T</text>
<text x="604" y="471" class="m n" textLength="8.0" lengthAdjust="spacingAndGlyphs" xml:space="preserve">T</text>
<text x="641" y="471" class="m n" textLength="9.4" lengthAdjust="spacingAndGlyphs" xml:space="preserve">C</text>
<text x="676" y="471" class="m n" textLength="8.0" lengthAdjust="spacingAndGlyphs" xml:space="preserve">T</text>
<text x="713" y="471" class="m n" textLength="9.4" lengthAdjust="spacingAndGlyphs" xml:space="preserve">C</text>
<text x="748" y="471" class="m n" textLength="8.0" lengthAdjust="spacingAndGlyphs" xml:space="preserve">T</text>
<text x="785" y="471" class="m n" textLength="9.4" lengthAdjust="spacingAndGlyphs" xml:space="preserve">C</text>
<text x="820" y="471" class="m n" textLength="8.0" lengthAdjust="spacingAndGlyphs" xml:space="preserve">T</text>
<text x="856" y="471" class="m n" textLength="8.0" lengthAdjust="spacingAndGlyphs" xml:space="preserve">T</text>
<text x="892" y="471" class="m n" textLength="8.0" lengthAdjust="spacingAndGlyphs" xml:space="preserve">T</text>
<text x="929" y="471" class="m n" textLength="9.4" lengthAdjust="spacingAndGlyphs" xml:space="preserve">C</text>
<text x="172" y="487" class="m e" style="fill:#7272a4" xml:space="preserve">=</text>
<text x="208" y="487" class="m e" style="fill:#7272a4" xml:space="preserve">=</text>
<text x="244" y="487" class="m e" style="fill:#7272a4" xml:space="preserve">=</text>
<text x="280" y="487" class="m e" style="fill:#7272a4" xml:space="preserve">=</text>
<text x="316" y="487" class="m e" style="fill:#7272a4" xml:space="preserve">=</text>
<text x="352" y="487" class="m e" style="fill:#7272a4" xml:space="preserve">=</text>
<text x="388" y="487" class="m e" style="fill:#7272a4" xml:space="preserve">=</text>
<text x="424" y="487" class="m e" style="fill:#7272a4" xml:space="preserve">=</text>
<text x="460" y="487" class="m e" style="fill:#7272a4" xml:space="preserve">=</text>
<text x="496" y="487" class="m e" style="fill:#7272a4" xml:space="preserve">=</text>
<text x="532" y="487" class="m e" style="fill:#7272a4" xml:space="preserve">=</text>
<text x="568" y="487" class="m e" style="fill:#7272a4" xml:space="preserve">=</text>
<text x="604" y="487" class="m e" style="fill:#7272a4" xml:space="preserve">=</text>
<text x="640" y="487" class="m e" style="fill:#7272a4" xml:space="preserve">=</text>
<text x="676" y="487" class="m e" style="fill:#7272a4" xml:space="preserve">=</text>
<text x="712" y="487" class="m e" style="fill:#7272a4" xml:space="preserve">=</text>
<text x="748" y="487" class="m e" style="fill:#7272a4" xml:space="preserve">=</text>
<text x="784" y="487" class="m e" style="fill:#7272a4" xml:space="preserve">=</text>
<text x="820" y="487" class="m e" style="fill:#7272a4" xml:space="preserve">=</text>
<text x="856" y="487" class="m e" style="fill:#7272a4" xml:space="preserve">=</text>
<text x="892" y="487" class="m e" style="fill:#7272a4" xml:space="preserve">=</text>
<text x="929" y="487" class="m e" style="fill:#7272a4" xml:space="preserve">=</text>
<text x="172" y="501" class="m e" style="fill:#7272a4" xml:space="preserve">-</text>
<text x="208" y="501" class="m e" style="fill:#7272a4" xml:space="preserve">-</text>
<text x="244" y="501" class="m e" style="fill:#7272a4" xml:space="preserve">-</text>
<text x="280" y="501" class="m e" style="fill:#7272a4" xml:space="preserve">-</text>
<text x="316" y="501" class="m e" style="fill:#7272a4" xml:space="preserve">-</text>
<text x="352" y="501" class="m e" style="fill:#7272a4" xml:space="preserve">-</text>
<text x="388" y="501" class="m e" style="fill:#7272a4" xml:space="preserve">-</text>
<text x="424" y="501" class="m e" style="fill:#7272a4" xml:space="preserve">-</text>
<text x="460" y="501" class="m e" style="fill:#7272a4" xml:space="preserve">-</text>
<text x="496" y="501" class="m e" style="fill:#7272a4" xml:space="preserve">-</text>
<text x="532" y="501" class="m e" style="fill:#7272a4" xml:space="preserve">-</text>
<text x="568" y="501" class="m e" style="fill:#7272a4" xml:space="preserve">-</text>
<text x="604" y="501" class="m e" style="fill:#7272a4" xml:space="preserve">-</text>
<text x="640" y="501" class="m e" style="fill:#7272a4" xml:space="preserve">-</text>
<text x="676" y="501" class="m e" style="fill:#7272a4" xml:space="preserve">-</text>
<text x="712" y="501" class="m e" style="fill:#7272a4" xml:space="preserve">-</text>
<text x="748" y="501" class="m e" style="fill:#7272a4" xml:space="preserve">-</text>
<text x="784" y="501" class="m e" style="fill:#7272a4" xml:space="preserve">-</text>
<text x="820" y="501" class="m e" style="fill:#7272a4" xml:space="preserve">-</text>
<text x="856" y="501" class="m e" style="fill:#7272a4" xml:space="preserve">-</text>
<text x="892" y="501" class="m e" style="fill:#7272a4" xml:space="preserve">-</text>
<text x="929" y="501" class="m e" style="fill:#7272a4" xml:space="preserve">-</text>
<text x="172" y="517" class="m e" style="fill:#7272a4" xml:space="preserve">=</text>
<text x="208" y="517" class="m e" style="fill:#7272a4" xml:space="preserve">=</text>
<text x="244" y="517" class="m e" style="fill:#7272a4" xml:space="preserve">=</text>
<text x="280" y="517" class="m e" style="fill:#7272a4" xml:space="preserve">=</text>
<text x="316" y="517" class="m e" style="fill:#7272a4" xml:space="preserve">=</text>
<text x="352" y="517" class="m e" style="fill:#7272a4" xml:space="preserve">=</text>
<text x="388" y="517" class="m e" style="fill:#7272a4" xml:space="preserve">=</text>
<text x="424" y="517" class="m e" style="fill:#7272a4" xml:space="preserve">=</text>
<text x="460" y="517" class="m e" style="fill:#7272a4" xml:space="preserve">=</text>
<text x="496" y="517" class="m e" style="fill:#7272a4" xml:space="preserve">=</text>
<text x="532" y="517" class="m e" style="fill:#7272a4" xml:space="preserve">=</text>
<text x="568" y="517" class="m e" style="fill:#7272a4" xml:space="preserve">=</text>
<text x="604" y="517" class="m e" style="fill:#7272a4" xml:space="preserve">=</text>
<text x="640" y="517" class="m e" style="fill:#7272a4" xml:space="preserve">=</text>
<text x="676" y="517" class="m e" style="fill:#7272a4" xml:space="preserve">=</text>
<text x="712" y="517" class="m e" style="fill:#7272a4" xml:space="preserve">=</text>
<text x="748" y="517" class="m e" style="fill:#7272a4" xml:space="preserve">=</text>
<text x="784" y="517" class="m e" style="fill:#7272a4" xml:space="preserve">=</text>
<text x="820" y="517" class="m e" style="fill:#7272a4" xml:space="preserve">=</text>
<text x="856" y="517" class="m e" style="fill:#7272a4" xml:space="preserve">=</text>
<text x="892" y="517" class="m e" style="fill:#7272a4" xml:space="preserve">=</text>
<text x="929" y="517" class="m e" style="fill:#7272a4" xml:space="preserve">=</text>
<text x="172" y="532" class="m e" style="fill:#7272a4" xml:space="preserve">=</text>
<text x="208" y="532" class="m e" style="fill:#7272a4" xml:space="preserve">=</text>
<text x="244" y="532" class="m e" style="fill:#7272a4" xml:space="preserve">=</text>
<text x="280" y="532" class="m e" style="fill:#7272a4" xml:space="preserve">=</text>
<text x="316" y="532" class="m e" style="fill:#7272a4" xml:space="preserve">=</text>
<text x="352" y="532" class="m e" style="fill:#7272a4" xml:space="preserve">=</text>
<text x="388" y="532" class="m e" style="fill:#7272a4" xml:space="preserve">=</text>
<text x="424" y="532" class="m e" style="fill:#7272a4" xml:space="preserve">=</text>
<text x="460" y="532" class="m e" style="fill:#7272a4" xml:space="preserve">=</text>
<text x="496" y="532" class="m e" style="fill:#7272a4" xml:space="preserve">=</text>
<text x="532" y="532" class="m e" style="fill:#7272a4" xml:space="preserve">=</text>
<text x="568" y="532" class="m e" style="fill:#7272a4" xml:space="preserve">=</text>
<text x="604" y="532" class="m e" style="fill:#7272a4" xml:space="preserve">=</text>
<text x="640" y="532" class="m e" style="fill:#7272a4" xml:space="preserve">=</text>
<text x="676" y="532" class="m e" style="fill:#7272a4" xml:space="preserve">=</text>
<text x="712" y="532" class="m e" style="fill:#7272a4" xml:space="preserve">=</text>
<text x="748" y="532" class="m e" style="fill:#7272a4" xml:space="preserve">=</text>
<text x="784" y="532" class="m e" style="fill:#7272a4" xml:space="preserve">=</text>
<text x="820" y="532" class="m e" style="fill:#7272a4" xml:space="preserve">=</text>
<text x="856" y="532" class="m e" style="fill:#7272a4" xml:space="preserve">=</text>
<text x="892" y="532" class="m e" style="fill:#7272a4" xml:space="preserve">=</text>
<text x="929" y="532" class="m e" style="fill:#7272a4" xml:space="preserve">=</text>
<text x="172" y="547" class="m e" style="fill:#7272a4" xml:space="preserve">=</text>
<text x="208" y="547" class="m e" style="fill:#7272a4" xml:space="preserve">=</text>
<text x="244" y="547" class="m e" style="fill:#7272a4" xml:space="preserve">=</text>
<text x="280" y="547" class="m e" style="fill:#7272a4" xml:space="preserve">=</text>
<text x="316" y="547" class="m e" style="fill:#7272a4" xml:space="preserve">=</text>
<text x="352" y="547" class="m e" style="fill:#7272a4" xml:space="preserve">=</text>
<text x="388" y="547" class="m e" style="fill:#7272a4" xml:space="preserve">=</text>
<text x="424" y="547" class="m e" style="fill:#7272a4" xml:space="preserve">=</text>
<text x="460" y="547" class="m e" style="fill:#7272a4" xml:space="preserve">=</text>
<text x="496" y="547" class="m e" style="fill:#7272a4" xml:space="preserve">=</text>
<text x="532" y="547" class="m e" style="fill:#7272a4" xml:space="preserve">=</text>
<text x="568" y="547" class="m e" style="fill:#7272a4" xml:space="preserve">=</text>
<text x="604" y="547" class="m e" style="fill:#7272a4" xml:space="preserve">=</text>
<text x="640" y="547" class="m e" style="fill:#7272a4" xml:space="preserve">=</text>
<text x="676" y="547" class="m e" style="fill:#7272a4" xml:space="preserve">=</text>
<text x="712" y="547" class="m e" style="fill:#7272a4" xml:space="preserve">=</text>
<text x="748" y="547" class="m e" style="fill:#7272a4" xml:space="preserve">=</text>
<text x="784" y="547" class="m e" style="fill:#7272a4" xml:space="preserve">=</text>
<text x="820" y="547" class="m e" style="fill:#7272a4" xml:space="preserve">=</text>
<text x="856" y="547" class="m e" style="fill:#7272a4" xml:space="preserve">=</text>
<text x="892" y="547" class="m e" style="fill:#7272a4" xml:space="preserve">=</text>
<text x="929" y="547" class="m e" style="fill:#7272a4" xml:space="preserve">=</text>
<text class="lg" transform="translate(155.95,407.94) scale(4.420,0.5650)" vector-effect="non-scaling-stroke" style="fill:#a59a14;stroke:#a59a14;stroke-width:0.35px">C</text>
<text class="lg" transform="translate(192.75,404.69) scale(4.420,0.0989)" style="fill:#a59a14">C</text>
<text class="lg" transform="translate(228.97,404.00) scale(4.600,0.4360)" style="fill:#00ff00">T</text>
<text class="lg" transform="translate(264.96,409.00) scale(4.600,0.7267)" style="fill:#00ff00">T</text>
<text class="lg" transform="translate(300.75,407.94) scale(4.420,0.5650)" vector-effect="non-scaling-stroke" style="fill:#a59a14;stroke:#a59a14;stroke-width:0.35px">C</text>
<text class="lg" transform="translate(336.75,403.96) scale(4.420,0.4237)" vector-effect="non-scaling-stroke" style="fill:#a59a14;stroke:#a59a14;stroke-width:0.35px">C</text>
<text class="lg" transform="translate(372.96,405.00) scale(4.600,0.1453)" style="fill:#00ff00">T</text>
<text class="lg" transform="translate(408.96,404.00) scale(4.600,0.4360)" style="fill:#00ff00">T</text>
<text class="lg" transform="translate(444.75,407.94) scale(4.420,0.5650)" vector-effect="non-scaling-stroke" style="fill:#a59a14;stroke:#a59a14;stroke-width:0.35px">C</text>
<text class="lg" transform="translate(444.96,410.00) scale(4.600,0.2907)" style="fill:#00ff00">T</text>
<text class="lg" transform="translate(480.75,408.93) scale(4.420,0.7062)" style="fill:#a59a14">C</text>
<text class="lg" transform="translate(480.96,410.00) scale(4.600,0.1453)" style="fill:#00ff00">T</text>
<text class="lg" transform="translate(516.97,404.00) scale(4.600,0.4360)" style="fill:#00ff00">T</text>
<text class="lg" transform="translate(624.75,403.96) scale(4.420,0.4237)" vector-effect="non-scaling-stroke" style="fill:#a59a14;stroke:#a59a14;stroke-width:0.35px">C</text>
<text class="lg" transform="translate(660.97,404.00) scale(4.600,0.4360)" style="fill:#00ff00">T</text>
<text class="lg" transform="translate(696.75,410.90) scale(4.420,0.9887)" style="fill:#a59a14">C</text>
<text class="lg" transform="translate(696.97,417.00) scale(4.600,0.8721)" style="fill:#00ff00">T</text>
<text class="lg" transform="translate(732.97,404.00) scale(4.600,0.4360)" style="fill:#00ff00">T</text>
<text class="lg" transform="translate(768.75,409.92) scale(4.420,0.8475)" style="fill:#a59a14">C</text>
<text class="lg" transform="translate(804.97,405.00) scale(4.600,0.1453)" style="fill:#00ff00">T</text>
<text class="lg" transform="translate(840.97,412.00) scale(4.600,1.1628)" style="fill:#00ff00">T</text>
<text class="lg" transform="translate(840.75,415.94) scale(4.420,0.5650)" vector-effect="non-scaling-stroke" style="fill:#a59a14;stroke:#a59a14;stroke-width:0.35px">C</text>
<text class="lg" transform="translate(876.97,404.00) scale(4.600,0.4360)" style="fill:#00ff00">T</text>
</svg></body></html>
